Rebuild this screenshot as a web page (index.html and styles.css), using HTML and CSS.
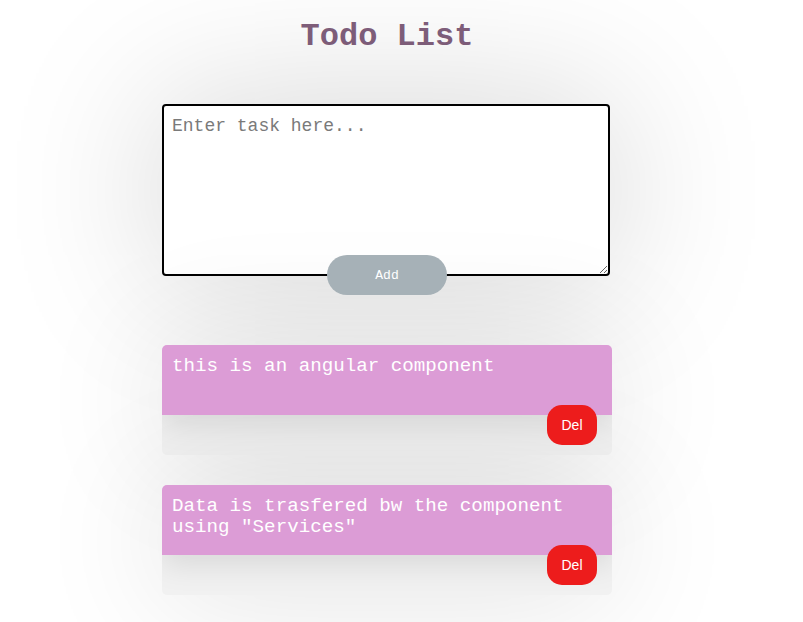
FILE: index.html
```html
<!DOCTYPE html>
<html lang="en">
<head>
<meta charset="utf-8">
<title>Todo List</title>
<link rel="stylesheet" href="styles.css">
</head>
<body>
  <main class="app">
    <h1 class="title">Todo List</h1>
    <form class="composer">
      <textarea class="task-input" placeholder="Enter task here..."></textarea>
      <button type="button" class="add-btn">Add</button>
    </form>
    <ul class="todo-list">
      <li class="todo-card">
        <div class="todo-text">this is an angular component</div>
        <div class="todo-footer"><button type="button" class="del-btn">Del</button></div>
      </li>
      <li class="todo-card">
        <div class="todo-text">Data is trasfered bw the component using "Services"</div>
        <div class="todo-footer"><button type="button" class="del-btn">Del</button></div>
      </li>
    </ul>
  </main>
</body>
</html>
```
FILE: styles.css
```css
html {
  height: 100%;
  background: #ffffff;
}

body {
  margin: 0;
  padding: 0;
  min-height: 100%;
  font-family: "Liberation Mono", "Courier New", monospace;
}

.app {
  width: 450px;
  margin-left: 162px;
  padding-top: 19px;
  padding-bottom: 27px;
}

.title {
  margin: 0;
  font-size: 32px;
  line-height: 36px;
  font-weight: bold;
  text-align: center;
  color: #82607d;
}

.composer {
  margin-top: 49px;
  display: flex;
  flex-direction: column;
  align-items: flex-start;
}

.task-input {
  display: block;
  box-sizing: border-box;
  width: 448px;
  height: 172px;
  margin: 0;
  padding: 10px 8px;
  border: 2px solid #000;
  border-radius: 4px;
  background: #fff;
  font-family: "Liberation Mono", "Courier New", monospace;
  font-size: 18px;
  color: #222;
  box-shadow: 0 0 160px rgba(0, 0, 0, 0.18);
  outline: none;
}

.task-input::placeholder {
  color: #7a7a7a;
}

.add-btn {
  align-self: center;
  width: 120px;
  height: 40px;
  margin-top: -21px;
  border: none;
  border-radius: 20px;
  background: #a6b1b7;
  color: #fff;
  font-family: "Liberation Mono", "Courier New", monospace;
  font-size: 13px;
  font-weight: normal;
  position: relative;
}

.todo-list {
  list-style: none;
  margin: 50px 0 0;
  padding: 0;
  display: flex;
  flex-direction: column;
  gap: 30px;
}

.todo-card {
  width: 450px;
  border-radius: 5px;
  overflow: hidden;
  background: #f1f1f1;
  box-shadow: 0 0 130px rgba(0, 0, 0, 0.12);
}

.todo-text {
  box-sizing: border-box;
  height: 70px;
  padding: 11px 10px 0;
  background: #dc9cd6;
  color: #fff;
  font-size: 19.2px;
  line-height: 21px;
  position: relative;
  box-shadow: 0 10px 30px rgba(0, 0, 0, 0.1);
}

.todo-footer {
  height: 40px;
  display: flex;
  justify-content: flex-end;
  align-items: flex-start;
  padding-right: 15px;
}

.del-btn {
  width: 50px;
  height: 40px;
  margin-top: -10px;
  border: none;
  border-radius: 15px;
  background: #ed1c1c;
  color: #fff;
  font-family: "Liberation Sans", Arial, sans-serif;
  font-size: 14px;
  position: relative;
}
```
